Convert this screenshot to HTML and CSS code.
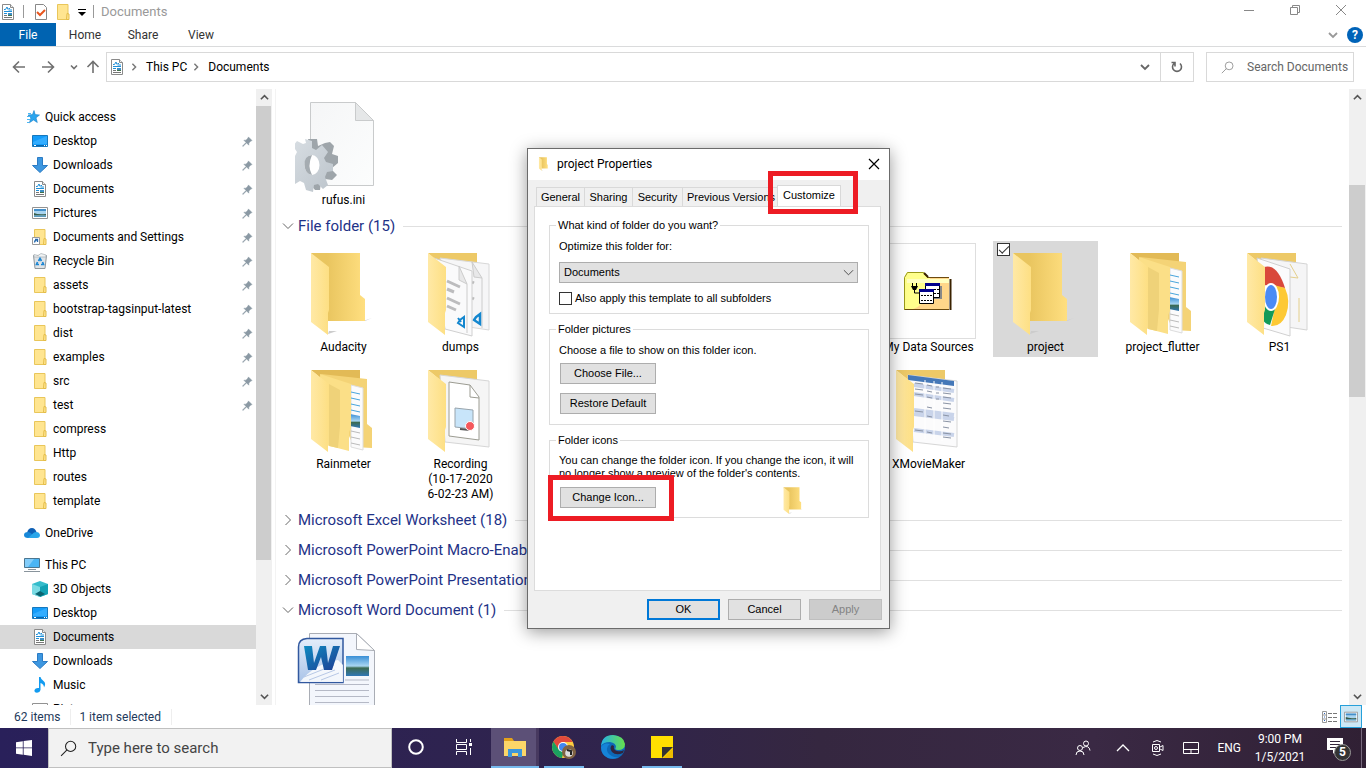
FILE: index.html
```html
<!DOCTYPE html>
<html lang="en">
<head>
<meta charset="utf-8">
<title>Documents</title>
<link rel="stylesheet" href="styles.css">
</head>
<body>
<svg class="defs" aria-hidden="true">
  <defs>
    <linearGradient id="gBack" x1="0" x2="1"><stop offset="0.300" stop-color="#e9c55f"/><stop offset="1" stop-color="#ffdf80"/></linearGradient>
    <linearGradient id="gFront" x1="0" x2="1"><stop offset="0" stop-color="#ffe9a6"/><stop offset="1" stop-color="#fddf83"/></linearGradient>
    <linearGradient id="gSky" x1="0" y1="0" x2="0" y2="1"><stop offset="0" stop-color="#3a8fd6"/><stop offset=".5" stop-color="#a9d6f2"/><stop offset=".6" stop-color="#3c6b52"/><stop offset="1" stop-color="#2f77b5"/></linearGradient>
    <linearGradient id="gPage" x1="0" y1="0" x2="1" y2="1"><stop offset="0" stop-color="#f5f6f7"/><stop offset="1" stop-color="#fcfdfd"/></linearGradient>
    <linearGradient id="gGear" x1="0" y1="0" x2="1" y2="1"><stop offset="0" stop-color="#d9dfe4"/><stop offset="1" stop-color="#bcc4cb"/></linearGradient>
    <linearGradient id="gWord" x1="0" y1="0" x2="0" y2="1"><stop offset="0" stop-color="#e4eefa"/><stop offset="1" stop-color="#a9c3e8"/></linearGradient>
    <linearGradient id="gW" x1="0" y1="0" x2="1" y2="1"><stop offset="0" stop-color="#0f8bc0"/><stop offset="1" stop-color="#1d3d94"/></linearGradient>
    <linearGradient id="gEdge" x1="0" y1="0" x2="1" y2="0"><stop offset="0" stop-color="#25b1e8"/><stop offset="1" stop-color="#67e04a"/></linearGradient>
  </defs>

  <symbol id="i-doc" viewBox="0 0 16 16">
    <path d="M2.500.500h8l3 3v12h-11z" fill="#fff" stroke="#8a8a8a"/><path d="M10.500.500v3h3" fill="#eee" stroke="#8a8a8a"/>
    <path d="M4 5.500h1.500L7 3l1 2.500M8.500 4.500h1.500M8.500 6h3.500M4 7.500h8M4 9.500h3" stroke="#1e8fd8" fill="none"/><path d="M4 11.500h3M4 13.500h8" stroke="#777"/><path d="M8 9h4v3H8z" fill="#3d8ec4"/><path d="M8 11h4v1H8z" fill="#40704a"/>
  </symbol>
  <symbol id="i-folder" viewBox="0 0 16 16">
    <path d="M2.500.500h10.500v15h-10.500z" fill="#ffe590" stroke="#e9c65a"/><path d="M12 9.500l2 .500v5.500h-2.500z" fill="#ffe590" stroke="#e4bd48"/>
  </symbol>
  <symbol id="i-link" viewBox="0 0 16 16">
    <use href="#i-folder"/><path d="M.500 8.500h7v7h-7z" fill="#fff" stroke="#999"/><path d="M2.500 13.500q0-2 2-2.500M3 10.500h2.500v2.500" fill="none" stroke="#2468ad" stroke-width="1.300"/>
  </symbol>
  <symbol id="i-star" viewBox="0 0 16 16">
    <path d="M10 1.500l1.200 4.100 4.300.400-3.500 2.800 1.300 4.700-3.800-2.500-4.100 2.800 1.500-4.900L4 6l4.500-.400z" fill="#2ba5ee" stroke="#1580ca" stroke-width=".6"/><path d="M4 4.500h3M3 7.500h3M3 10.500h3M3 13.500h2" stroke="#4ab6f2"/>
  </symbol>
  <symbol id="i-desktop" viewBox="0 0 16 16"><path d="M.500 2.500h15v11H.500z" fill="#149cf9" stroke="#1678bd"/><path d="M1 9L15 3v8H1z" fill="#33adff"/><path d="M1 12.500h14" stroke="#0a66ac"/><path d="M2 12.500h2M12 12.500h1M14 12.500h1" stroke="#fff"/></symbol>
  <symbol id="i-down" viewBox="0 0 16 16"><path d="M5.500.500h5v8h5L8 15.500.500 8.500h5z" fill="#3d97e0" stroke="#2b7bc4"/></symbol>
  <symbol id="i-pic" viewBox="0 0 16 16"><path d="M.500 2.500h15v11H.500z" fill="#fff" stroke="#929292"/><path d="M2 4h12v8H2z" fill="#a9d4ef"/><path d="M2 4h12v2H2z" fill="#438fca"/><path d="M2 8q4 2 12 1v1.500H2z" fill="#395d48"/><path d="M2 10.500h12V12H2z" fill="#5c9cbe"/></symbol>
  <symbol id="i-bin" viewBox="0 0 16 16"><path d="M1.500 2.500h13l-1.500 13H3z" fill="#dfe3e6" stroke="#8f979c"/><path d="M2 1.500l4 1 3-2 5 1.500v2H2z" fill="#f1f3f4" stroke="#a5adb1" stroke-width=".7"/><path d="M6.500 8L8 5.500l1.500 2.500M10.500 9l1 2.500H9M7 11.500H4.500l1-2.500" fill="none" stroke="#1b86d4" stroke-width="1.700"/></symbol>
  <symbol id="i-cloud" viewBox="0 0 16 16"><path d="M3 8Q4 3 8 3q3 0 4.500 4L9 12z" fill="#0f60b5"/><path d="M4 13Q0 13 0 10t4-3q2 0 5 3l3 3z" fill="#1888d8"/><path d="M4 13l6-5.500q5-1.500 6 2.500 0 3-3 3z" fill="#2aa6ea"/></symbol>
  <symbol id="i-pc" viewBox="0 0 16 16"><path d="M.500 1.500h15v9H.500z" fill="#4ab5f5" stroke="#4b7690"/><path d="M1 2h9L4 10H1z" fill="#83cdfa"/><path d="M4 12.500h8M0 14.500h16" stroke="#89949c"/></symbol>
  <symbol id="i-cube" viewBox="0 0 16 16"><path d="M0 3l8-3 8 3v10l-8 3-8-3z" fill="#35bccb"/><path d="M0 3l8 3v10l-8-3z" fill="#7adbe4"/><path d="M8 6l8-3v10l-8 3z" fill="#13a2b4"/><path d="M3 13l5-3 5 3-5 2.500z" fill="#0b6471"/></symbol>
  <symbol id="i-music" viewBox="0 0 16 16"><path d="M7 0h1.500q.500 2.500 3 4 3 2.500.500 6.500 0-3.500-3.500-4.500V13Q8 15.500 5 15.800 2 15.500 2.500 13q1-2.500 4.500-2z" fill="#129bf0"/></symbol>
  <symbol id="i-pin" viewBox="0 0 12 12"><path d="M7 1l4 4-1.300.500L7.500 7.700 7.400 10 5 7.600 1 11.500.500 11 4.400 7 2 4.600l2.300-.100L6.500 2.300z" fill="#8b99a4" stroke="#8b99a4" stroke-width=".5"/></symbol>
  <symbol id="i-search" viewBox="0 0 16 16"><circle cx="10" cy="6" r="4.800" fill="none" stroke="currentColor"/><path d="M6.600 9.400L1 15" stroke="currentColor"/></symbol>
  <symbol id="i-chev" viewBox="0 0 10 10"><path d="M1 3l4 4 4-4" fill="none" stroke="currentColor" stroke-width="1.800"/></symbol>
  <symbol id="i-thin" viewBox="0 0 12 12"><path d="M1 3.500l5 5 5-5" fill="none" stroke="currentColor"/></symbol>

  <symbol id="f-front" viewBox="0 0 96 96"><path d="M16 10l18 14v43l-1 3v22L16 79z" fill="url(#gFront)"/></symbol>
  <symbol id="f-plain" viewBox="0 0 96 96">
    <path d="M68 78l9-3-7 3zM33 91l9-3-8 0z" fill="#ccc"/>
    <path d="M16 10h49v42l5 4v22H33z" fill="url(#gBack)"/><use href="#f-front"/>
  </symbol>
  <symbol id="f-code" viewBox="0 0 96 96">
    <path d="M16 10h49v12H28z" fill="#edc967"/>
    <path d="M28 15l49 6v66l-20-3z" fill="#f6f6f7" stroke="#d8d8d8"/><path d="M60 19l10 16-8-1z" fill="#e8e8e9" stroke="#ccc"/><path d="M70 35v50" stroke="#ccc"/>
    <path d="M60 39l2 1M60 55l2 1" stroke="#bbb" stroke-width="3"/><path d="M68 71v10l-6-4 2-3z" fill="none" stroke="#1487cf" stroke-width="2.500"/>
    <path d="M22 15l38 13v65l-27-7z" fill="#fafafb" stroke="#d0d0d0"/><path d="M47 23l8 18-8-4z" fill="#e8e8e9" stroke="#ccc"/><path d="M55 41v49" stroke="#ccc"/>
    <path d="M35 38l13 6M35 46l7 3M35 55l13 6M35 63l9 4" stroke="#bcbcbe" stroke-width="3"/><path d="M52 74v10l-6-4 2-3zM46 75l3 4" fill="none" stroke="#1487cf" stroke-width="2"/>
    <use href="#f-front"/>
  </symbol>
  <symbol id="f-nested" viewBox="0 0 96 96">
    <path d="M16 10h49v10H28z" fill="#e2ba56"/><path d="M26 14l46 5v45l5 4v20l-18-1z" fill="#f4d376"/>
    <path d="M56 25l12 3v62l-12-3z" fill="#fbfbfc" stroke="#ddd"/><path d="M56 32l9 2M56 38l9 2M56 44l9 2M56 50l9 2" stroke="#48a5dc"/><path d="M55 54l10 2v12l-10-2z" fill="url(#gSky)"/><path d="M56 71l9 2M56 77l9 2M56 83l9 2" stroke="#bbb"/>
    <path d="M25 14l31 10v44l-2 4v19l-27-7z" fill="#fbdf87"/><path d="M34 24l11 6v36l-2 22-9-2z" fill="#efd279"/>
    <use href="#f-front"/>
  </symbol>
  <symbol id="f-rec" viewBox="0 0 96 96">
    <path d="M16 10h49v10H28z" fill="#edc967"/><path d="M28 15l49 6v66l-44-5z" fill="#f5f5f5" stroke="#d6d6d6"/>
    <path d="M37 22l21 3 9 12v43l-30-4z" fill="#fff" stroke="#9c9c92"/><path d="M58 25v12l9 1" fill="none" stroke="#9c9c92"/>
    <path d="M43 48l18 2v19l-18-2z" fill="#c8e5fa" stroke="#98a4ac"/><path d="M48 69l10 1" stroke="#555" stroke-width="2"/><circle cx="58" cy="66" r="4.500" fill="#f4585c" stroke="#fff"/>
    <use href="#f-front"/>
  </symbol>
  <symbol id="f-chrome" viewBox="0 0 96 96">
    <path d="M16 10h49v10H28z" fill="#edc967"/><path d="M30 15l46 6v66l-20-3z" fill="#f5f5f6" stroke="#d4d4d4"/><path d="M59 21l8 14-8-1M68 55v24" stroke="#e4cf8c" fill="none"/>
    <path d="M26 15l33 11v67l-27-8z" fill="#fbfbfc" stroke="#d0d0d0"/>
    <path d="M33 24Q46 20 54 45L33 42z" fill="#d9483b"/><path d="M43 42l11 3q6 13 1 27-5 12-15 11L44 64z" fill="#fdc935"/><path d="M33 62l11 4-5 16q-5-1-7-5z" fill="#129a58"/>
    <ellipse cx="40" cy="54" rx="8" ry="14" fill="#fff"/><ellipse cx="40" cy="54" rx="6" ry="12" fill="#4b8bf5"/>
    <use href="#f-front"/>
  </symbol>
  <symbol id="f-sheet" viewBox="0 0 96 96">
    <path d="M16 10h49v10H28z" fill="#edc967"/><path d="M28 15l49 6v66l-44-5z" fill="#fbfbfc" stroke="#d6d6d6"/>
    <path d="M28 15l46 6v5l-46-6z" fill="#4578b8"/>
    <path d="M34 25l40 6M34 34l40 6M34 50l40 5M34 54l40 5M34 70l40 5" stroke="#c9d4ea" stroke-width="4"/>
    <path d="M45 20v59M54 21v59M62 22v59" stroke="#fff"/><path d="M35 23l8 1M35 29l8 1M35 34l8 1M35 51l8 1M35 70l8 1M47 25l5 1M47 31l5 1M47 37l5 1M47 47l5 1M47 56l5 1M47 72l5 1M63 28l8 1M63 33l8 1M63 37l8 1M63 43l8 1M63 48l8 1M63 55l6 1M63 61l8 1M63 67l6 1M63 73l8 1M63 77l8 1M56 27l3 0M56 33l3 0M56 39l3 0" stroke="#8a93a4"/>
    <use href="#f-front"/>
  </symbol>
  <symbol id="f-data" viewBox="0 0 48 40">
    <path d="M0 7l3-6h17l4 5h21v33H0z" fill="#ffff8c"/><path d="M26 7h19v32H5q20-3 21-32z" fill="#ffd68a"/><path d="M3 8h42v4H3z" fill="#ffffc0"/>
    <path d="M.500 39V6.500l3-5h16l4 5" fill="none" stroke="#999919"/><path d="M23 6.500h22M1 38.500h44" stroke="#6b4a10"/><path d="M46.500 8v31M20 2l4 4" stroke="#3a2200" stroke-width="2"/>
    <path d="M8.500 15v-3M12.500 15v-3M10.500 19v3h5" stroke="#000" fill="none"/><path d="M7 15h7l-2 4H9z" fill="#000"/>
    <path d="M23 15h15v13H23z" fill="#888"/><path d="M21.500 13.500h14v13h-14z" fill="#fff" stroke="#000"/><path d="M21 12h15v3H21z" fill="#00008b"/>
    <path d="M15.500 19.500h14v13h-14z" fill="#fff" stroke="#000"/><path d="M15 18h15v3H15z" fill="#00008b"/><path d="M17 24.500h11M17 29.500h11M30 18.500h5M30 22.500h5" stroke="#000" stroke-dasharray="2 1"/>
  </symbol>
  <symbol id="f-ini" viewBox="0 0 96 96">
    <g transform="translate(-1 -2)">
    <path d="M16.500 8.500h45l18 18v65h-63z" fill="url(#gPage)" stroke="#c9cbcc"/><path d="M61.500 8.500v18h18z" fill="#e5e7e8" stroke="#c9cbcc"/>
    <path d="M14 45l9 0 1 7 7-3 5-1 4 4-2 8 6 2v7l-6 5 1 3 4 4-5 5-7-1-4 3-1 8h-5l-5-6 2-30z" fill="#9ea5aa"/>
    <path d="M11 45l7 2v7l4 2 6-5 6 7-4 6 2 4 7 2v7l-6 1-2 5 3 8-5 4-5-5-4 1-1 7-7-2-2-7-4-2-5 3-4-6 4-6-1-4-6-4 1-8 6 0 2-4-4-6 4-5 6 3 3-1z" fill="url(#gGear)"/>
    <ellipse cx="18" cy="71" rx="7.500" ry="10" fill="#fff"/><path d="M18 61q-8 1-7.500 10 .500 9 7.500 10-5-9 0-20z" fill="#a5acb1"/>
    </g>
  </symbol>
  <symbol id="f-word" viewBox="0 0 96 96">
    <path d="M14.500 6.500h47l18 17v80h-65z" fill="#f3f6fc" stroke="#a9adb5"/><path d="M61.500 6.500v16l18 1z" fill="#fff" stroke="#a9adb5"/><path d="M51 29h23v20H51z" fill="url(#gSky)"/><path d="M50 53h24M20 57.500h54M20 63.500h54M20 69.500h54M20 75.500h54M20 81.500h54" stroke="#b5b9c6"/>
    <path d="M12 11.500h36v44H3.500V20q0-8 8.500-8.500z" fill="url(#gWord)" stroke="#31589f" stroke-width="1.500"/><path d="M5 55q14-18 38-22l5 5v17z" fill="#fff" opacity=".85"/><path d="M9 50l30-12M14 53l26-10M26 53l18-7" stroke="#b7c8e6"/>
    <path d="M9 19h8l2 17 6-17h6l2 17 5-17h7L37 43h-8l-3-13-5 13h-8z" fill="url(#gW)"/>
  </symbol>
</svg>

<div class="desktop">
  <header class="titlebar">
    <svg class="ic"><use href="#i-doc"/></svg><i class="bar"></i>
    <svg class="ic check" viewBox="0 0 16 16"><path d="M2.500.500h8l3 3v12h-11z" fill="#fff" stroke="#888"/><path d="M4 8l3 3 5-5" fill="none" stroke="#e8551e" stroke-width="2"/></svg>
    <svg class="ic"><use href="#i-folder"/></svg>
    <svg class="more" viewBox="0 0 8 8"><path d="M0 1.500h8" stroke="#000"/><path d="M0 4h8L4 8z"/></svg><i class="bar"></i>
    <span class="window-name">Documents</span>
    <div class="window-buttons">
      <button aria-label="Minimize"><svg viewBox="0 0 12 12"><path d="M1 6.500h10" stroke="#888"/></svg></button>
      <button aria-label="Restore"><svg viewBox="0 0 12 12"><path d="M1.500 3.500h7v7h-7zM3.500 3V1.500h7v7H9" fill="none" stroke="#888"/></svg></button>
      <button aria-label="Close"><svg viewBox="0 0 12 12"><path d="M1 1l10 10M11 1L1 11" stroke="#888"/></svg></button>
    </div>
  </header>
  <nav class="ribbon">
    <button class="file">File</button><button>Home</button><button>Share</button><button>View</button>
    <span class="ribbon-end"><svg class="tiny"><use href="#i-chev"/></svg><b class="help">?</b></span>
  </nav>
  <div class="navbar">
    <div class="arrows">
      <button aria-label="Back"><svg viewBox="0 0 14 14"><path d="M13 7H1.500M7 1.500L1.500 7 7 12.500" /></svg></button>
      <button aria-label="Forward"><svg viewBox="0 0 14 14"><path d="M1 7h11.500M7 1.500L12.500 7 7 12.500"/></svg></button>
      <button aria-label="Recent" class="recent"><svg viewBox="0 0 10 10"><path d="M2 3.500l3 3 3-3"/></svg></button>
      <button aria-label="Up"><svg viewBox="0 0 14 14"><path d="M7 13V1.500M1.500 7L7 1.500 12.500 7"/></svg></button>
    </div>
    <div class="address">
      <svg class="ic"><use href="#i-doc"/></svg>
      <svg class="crumb"><use href="#i-chev"/></svg><span>This PC</span><svg class="crumb"><use href="#i-chev"/></svg><span>Documents</span>
      <svg class="drop"><use href="#i-chev"/></svg>
      <button class="refresh" aria-label="Refresh"><svg viewBox="0 0 14 14"><path d="M10 3.500a4.500 4.500 0 1 1-6 0M1.500 2.500H5V6.500" fill="none" stroke="#666" stroke-width="1.600"/></svg></button>
    </div>
    <label class="search"><svg class="glass"><use href="#i-search"/></svg><input aria-label="Search Documents" placeholder="Search Documents"></label>
  </div>

  <main class="main">
    <aside class="side">
      <ul class="tree">
        <li class="root"><svg class="ic"><use href="#i-star"/></svg>Quick access</li>
        <li><svg class="ic"><use href="#i-desktop"/></svg>Desktop<svg class="pin"><use href="#i-pin"/></svg></li>
        <li><svg class="ic"><use href="#i-down"/></svg>Downloads<svg class="pin"><use href="#i-pin"/></svg></li>
        <li><svg class="ic"><use href="#i-doc"/></svg>Documents<svg class="pin"><use href="#i-pin"/></svg></li>
        <li><svg class="ic"><use href="#i-pic"/></svg>Pictures<svg class="pin"><use href="#i-pin"/></svg></li>
        <li><svg class="ic"><use href="#i-link"/></svg>Documents and Settings<svg class="pin"><use href="#i-pin"/></svg></li>
        <li><svg class="ic"><use href="#i-bin"/></svg>Recycle Bin<svg class="pin"><use href="#i-pin"/></svg></li>
        <li><svg class="ic"><use href="#i-folder"/></svg>assets<svg class="pin"><use href="#i-pin"/></svg></li>
        <li><svg class="ic"><use href="#i-folder"/></svg>bootstrap-tagsinput-latest<svg class="pin"><use href="#i-pin"/></svg></li>
        <li><svg class="ic"><use href="#i-folder"/></svg>dist<svg class="pin"><use href="#i-pin"/></svg></li>
        <li><svg class="ic"><use href="#i-folder"/></svg>examples<svg class="pin"><use href="#i-pin"/></svg></li>
        <li><svg class="ic"><use href="#i-folder"/></svg>src<svg class="pin"><use href="#i-pin"/></svg></li>
        <li><svg class="ic"><use href="#i-folder"/></svg>test<svg class="pin"><use href="#i-pin"/></svg></li>
        <li><svg class="ic"><use href="#i-folder"/></svg>compress</li>
        <li><svg class="ic"><use href="#i-folder"/></svg>Http</li>
        <li><svg class="ic"><use href="#i-folder"/></svg>routes</li>
        <li><svg class="ic"><use href="#i-folder"/></svg>template</li>
        <li class="root gap"><svg class="ic"><use href="#i-cloud"/></svg>OneDrive</li>
        <li class="root gap"><svg class="ic"><use href="#i-pc"/></svg>This PC</li>
        <li><svg class="ic"><use href="#i-cube"/></svg>3D Objects</li>
        <li><svg class="ic"><use href="#i-desktop"/></svg>Desktop</li>
        <li class="current"><svg class="ic"><use href="#i-doc"/></svg>Documents</li>
        <li><svg class="ic"><use href="#i-down"/></svg>Downloads</li>
        <li><svg class="ic"><use href="#i-music"/></svg>Music</li>
        <li><svg class="ic"><use href="#i-pic"/></svg>Pictures</li>
      </ul>
      <div class="scroll"><svg class="up"><use href="#i-chev"/></svg><div class="track"><div class="thumb side-thumb"></div></div><svg><use href="#i-chev"/></svg></div>
    </aside>

    <section class="files">
      <div class="grid">
        <figure><svg><use href="#f-ini"/></svg><figcaption>rufus.ini</figcaption></figure>
      </div>
      <h2><svg><use href="#i-thin"/></svg>File folder (15)</h2>
      <div class="grid">
        <figure><svg><use href="#f-plain"/></svg><figcaption>Audacity</figcaption></figure>
        <figure><svg><use href="#f-code"/></svg><figcaption>dumps</figcaption></figure>
        <figure class="c6"><div class="thumbnail"><svg><use href="#f-data"/></svg></div><figcaption>My Data Sources</figcaption></figure>
        <figure class="selected"><input type="checkbox" class="tick" aria-label="Select project" checked><svg><use href="#f-plain"/></svg><figcaption>project</figcaption></figure>
        <figure><svg><use href="#f-nested"/></svg><figcaption>project_flutter</figcaption></figure>
        <figure><svg><use href="#f-chrome"/></svg><figcaption>PS1</figcaption></figure>
        <figure><svg><use href="#f-nested"/></svg><figcaption>Rainmeter</figcaption></figure>
        <figure><svg><use href="#f-rec"/></svg><figcaption>Recording<br>(10-17-2020<br>6-02-23 AM)</figcaption></figure>
        <figure class="c6"><svg><use href="#f-sheet"/></svg><figcaption>XMovieMaker</figcaption></figure>
      </div>
      <h2 class="closed"><svg><use href="#i-thin"/></svg>Microsoft Excel Worksheet (18)</h2>
      <h2 class="closed"><svg><use href="#i-thin"/></svg>Microsoft PowerPoint Macro-Enabled</h2>
      <h2 class="closed"><svg><use href="#i-thin"/></svg>Microsoft PowerPoint Presentation</h2>
      <h2><svg><use href="#i-thin"/></svg>Microsoft Word Document (1)</h2>
      <div class="grid"><figure><svg><use href="#f-word"/></svg></figure></div>
    </section>
    <div class="scroll main-scroll"><svg class="up"><use href="#i-chev"/></svg><div class="track"><div class="thumb main-thumb"></div></div><svg><use href="#i-chev"/></svg></div>
  </main>

  <footer class="status">
    <span>62 items</span><span>1 item selected</span>
    <button class="view" aria-label="Details"><svg viewBox="0 0 16 12"><path d="M.500.500h4v11h-4zM.500 4h4M.500 8h4" fill="none" stroke="#999"/><path d="M2 2.500h1M2 6h1M2 9.500h1" stroke="#36b"/><path d="M6 2.500h4M11 2.500h4M6 6.500h4M11 6.500h4M6 10.500h4M11 10.500h4" stroke="#777"/></svg></button>
    <button class="view on" aria-label="Large icons"><svg viewBox="0 0 16 16"><use href="#i-pic"/></svg></button>
  </footer>

  <div class="taskbar">
    <button class="start" aria-label="Start"><svg viewBox="0 0 16 16"><path d="M0 2.200l6.800-1v6.300H0zM7.600 1.100L16 0v7.500H7.600zM0 8.300h6.800v6.400l-6.800-1zM7.600 8.300H16V16l-8.400-1.200z" fill="#fff"/></svg></button>
    <label class="task-search"><svg><use href="#i-search"/></svg><input aria-label="Type here to search" placeholder="Type here to search"></label>
    <button class="task" aria-label="Cortana"><svg viewBox="0 0 24 24"><circle cx="12" cy="12" r="6.800" fill="none" stroke="#fff" stroke-width="2"/></svg></button>
    <button class="task" aria-label="Task view"><svg viewBox="0 0 24 24"><path d="M4.500 4v3.500h10V4M4.500 20v-3.500h10V20M4.500 9.500h10v5h-10zM18.500 4v3M18.500 13v7" fill="none" stroke="#fff"/><path d="M17 8h3v3h-3z" fill="#fff"/></svg></button>
    <button class="task active open" aria-label="File Explorer"><svg viewBox="0 0 24 24"><path d="M1 3h8l2 3h11v14H1z" fill="#e3a21a"/><path d="M1 6h22v15H1z" fill="#fcd668"/><path d="M5 14h14v8h-4v-4H9v4H5z" fill="#3c97dc"/></svg></button>
    <button class="task open narrow" aria-label="Chrome"><svg viewBox="0 0 24 24"><circle cx="11" cy="12" r="11" fill="#ffcd40"/><path d="M11 1a11 11 0 0 1 9.600 6H11L6 14 1.500 6.500A11 11 0 0 1 11 1z" fill="#e24a3c"/><path d="M1.500 6.500L7 15h5l-2 8A11 11 0 0 1 1.500 6.500z" fill="#1ba160"/><circle cx="11" cy="12" r="5" fill="#fff"/><circle cx="11" cy="12" r="4" fill="#4287f0"/><circle cx="17" cy="17" r="7" fill="#806343"/><circle cx="17" cy="18" r="3.800" fill="#ddd"/><path d="M15 15l4 1v4" fill="none" stroke="#222" stroke-width="2"/></svg></button>
    <button class="task" aria-label="Edge"><svg viewBox="0 0 24 24"><circle cx="12" cy="12" r="12" fill="#0d69b8"/><path d="M0 11Q1 0 12 0q11 1 12 9 0 6-7 6-4 0-2-3 0-4-6-5-7 0-9 4z" fill="url(#gEdge)"/><path d="M9 9q-5 3-2 9 4 5 11 4-5 3-11 1Q0 20 0 12q3-5 9-3z" fill="#1684d8"/><path d="M11 10q-3 3 0 7 4 4 11 1l1-3q-3 2-7 1-4-1-3-5z" fill="#30253f"/></svg></button>
    <button class="task open narrow" aria-label="Sticky Notes"><svg viewBox="0 0 24 24"><path d="M1 1h22v22H1z" fill="#ffdf00"/><path d="M12 23V12h11z" fill="#333"/><path d="M13 23l10-10v10z" fill="#eebd00"/></svg></button>
    <div class="tray">
      <svg viewBox="0 0 16 16"><g fill="none" stroke="#fff"><circle cx="11" cy="3.500" r="2.500"/><circle cx="5" cy="8" r="2.500"/><path d="M1 15q0-4 4-4t4 4M8 7.500q6-3 7 3"/></g></svg>
      <svg viewBox="0 0 16 16"><path d="M2 11l6-6 6 6" fill="none" stroke="#fff" stroke-width="1.300"/></svg>
      <svg viewBox="0 0 16 16"><path d="M3.500 4.500h7v7h-7zM11 7l3-1.500v5L11 9M4 2q4-3 8 0M4 14q4 3 8 0" fill="none" stroke="#fff"/><circle cx="7" cy="8" r="1.500" fill="none" stroke="#fff"/></svg>
      <svg viewBox="0 0 16 16"><path d="M.500 2.500h15v11H.500zM.500 9.500h15M8 9.500v4" fill="none" stroke="#fff"/></svg>
      <span class="lang">ENG</span>
      <span class="clock">9:00 PM<br>1/5/2021</span>
      <span class="note"><svg viewBox="0 0 16 16"><path d="M0 0h16v12H9l-3 4v-4H0z" fill="#fff"/><path d="M3 3.500h10M3 6.500h10M3 9.500h7" stroke="#33263c"/></svg><b>5</b></span>
      <button class="peek" aria-label="Show desktop"></button>
    </div>
  </div>

  <div class="dialog" role="dialog" aria-label="project Properties">
    <div class="dialog-title"><svg viewBox="14 8 60 86"><use href="#f-plain" width="96" height="96"/></svg><span>project Properties</span><button aria-label="Close"><svg viewBox="0 0 12 12"><path d="M1 1l10 10M11 1L1 11" stroke="#000" stroke-width="1.200"/></svg></button></div>
    <div class="tabs"><button>General</button><button>Sharing</button><button class="third">Security</button><button class="last">Previous Versions</button><button class="front">Customize<span class="mark mark-tab"></span></button></div>
    <div class="panel">
      <fieldset><legend>What kind of folder do you want?</legend>
        <label for="kind">Optimize this folder for:</label>
        <div class="pick"><select id="kind"><option>Documents</option></select><svg><use href="#i-thin"/></svg></div>
        <label class="also"><input type="checkbox">Also apply this template to all subfolders</label>
      </fieldset>
      <fieldset class="pictures"><legend>Folder pictures</legend>
        <p>Choose a file to show on this folder icon.</p>
        <button class="btn first">Choose File...</button>
        <button class="btn">Restore Default</button>
      </fieldset>
      <fieldset><legend>Folder icons</legend>
        <p class="two">You can change the folder icon. If you change the icon, it will<br>no longer show a preview of the folder's contents.</p>
        <div class="change"><div class="btn-wrap"><button class="btn">Change Icon...</button><span class="mark mark-icon"></span></div><svg viewBox="15 9 60 86"><use href="#f-plain" width="96" height="96"/></svg></div>
      </fieldset>
    </div>
    <div class="actions"><button class="ok">OK</button><button>Cancel</button><button disabled>Apply</button></div>
  </div>
</div>
</body>
</html>
```

FILE: styles.css
```css
* { box-sizing: border-box; }
body { margin: 0; font: 12px/15px Roboto, "Open Sans", sans-serif; color: #000; background: #fff; }
button, input, select { font: inherit; color: inherit; margin: 0; }
button { border: 0; padding: 0; background: none; }
svg { display: block; flex: none; }
.defs { position: absolute; width: 0; height: 0; }
.desktop { position: relative; height: 100vh; display: flex; flex-direction: column; overflow: hidden; }
.ic { width: 16px; height: 16px; }

.titlebar { height: 23px; display: flex; align-items: center; }
.titlebar .bar { width: 1px; height: 13px; background: #999; margin: 0 7px; }
.titlebar .check { margin: 0 6px 0 2px; }
.more { width: 8px; height: 8px; margin-left: 7px; }
.window-name { color: #999; font-size: 13px; }
.window-buttons { margin-left: auto; display: flex; padding-right: 2px; }
.window-buttons button { width: 46px; height: 23px; display: grid; place-items: center; padding-bottom: 3px; }
.window-buttons svg { width: 12px; height: 12px; }

.ribbon { height: 24px; display: flex; border-bottom: 1px solid #dadbdc; color: #333; }
.ribbon button { width: 58px; padding-top: 1px; }
.ribbon .file { width: 56px; background: #0063b1; color: #fff; }
.ribbon-end { margin-left: auto; display: flex; align-items: center; gap: 9px; padding-right: 3px; color: #999; }
.tiny { width: 10px; height: 10px; }
.help { width: 16px; height: 16px; border-radius: 50%; background: #0063b8; color: #fff; text-align: center; line-height: 16px; }

.navbar { height: 42px; padding: 5px 12px 7px; display: flex; }
.arrows { width: 94px; display: flex; align-items: center; justify-content: space-between; padding-right: 6px; }
.arrows svg { width: 14px; height: 14px; fill: none; stroke: #707070; stroke-width: 1.6; }
.arrows button { margin-right: 8px; }
.arrows button:last-child { margin-right: 0; }
.arrows .recent { margin-right: 0; }
.arrows .recent svg { width: 10px; height: 10px; }
.address { flex: 1; border: 1px solid #d9d9d9; display: flex; align-items: center; padding-left: 2px; }
.crumb { width: 8px; height: 8px; transform: rotate(-90deg); margin: 0 8px 0 5px; color: #777; }
.drop { width: 10px; height: 10px; color: #666; margin-left: auto; margin-right: 10px; }
.refresh { width: 33px; align-self: stretch; border-left: 1px solid #d9d9d9; display: grid; place-items: center; }
.refresh svg { width: 14px; height: 14px; }
.search { width: 148px; margin-left: 12px; border: 1px solid #d9d9d9; display: flex; align-items: center; padding-left: 14px; gap: 13px; }
.glass { width: 13px; height: 13px; color: #888; }
.search input, .task-search input { border: 0; background: none; outline: 0; padding: 0; min-width: 0; flex: 1; }
.search input::placeholder { color: #666; opacity: 1; }

.main { flex: 1; min-height: 0; display: flex; }
.side { width: 276px; display: flex; border-right: 1px solid #f3f3f3; overflow: hidden; padding-right: 3px; }
.tree { list-style: none; margin: 0; padding: 16px 0 0; flex: 1; overflow: hidden; }
.tree li { height: 24px; display: flex; align-items: center; gap: 5px; padding: 0 3px 0 32px; }
.tree .root { padding-left: 24px; }
.tree .gap { margin-top: 8px; }
.tree .current { background: #d9d9d9; }
.pin { width: 11px; height: 11px; margin-left: auto; }
.scroll { width: 16px; background: #f0f0f0; display: flex; flex-direction: column; align-items: center; color: #555; }
.scroll > svg { width: 9px; height: 17px; }
.scroll .up { transform: rotate(180deg); }
.track { flex: 1; align-self: stretch; }
.thumb { background: #cdcdcd; margin-right: 1px; }
.side-thumb { height: 78%; }
.main-scroll { width: 17px; }
.main-thumb { height: 36.5%; margin-top: 79px; }

.files { flex: 1; min-width: 0; overflow: hidden; padding: 5px 7px 0 8px; }
.grid { display: grid; grid-template-columns: repeat(9, 117px); }
figure { margin: 0 5px 1px 7px; min-height: 116px; padding: 2px 0; display: flex; flex-direction: column; align-items: center; position: relative; }
figure > svg { width: 96px; height: 96px; margin-right: 1px; }
figcaption { margin-top: 1px; text-align: center; white-space: nowrap; }
.c6 { grid-column: 6; }
.selected { background: #d9d9d9; }
.thumbnail { width: 96px; height: 96px; margin-right: 1px; border: 1px solid #dedede; display: grid; place-items: center; }
.thumbnail svg { width: 48px; height: 40px; }
.tick { position: absolute; left: 4px; top: 2px; width: 13px; height: 13px; appearance: none; border: 1px solid #333; background: #fff; }
.tick::after { content: ""; display: block; width: 9px; height: 4px; margin: 2px 1px; border: solid #333; border-width: 0 0 1px 1px; transform: rotate(-45deg); }
h2 { margin: 0; height: 30px; display: flex; align-items: center; font-size: 15px; line-height: 20px; font-weight: 400; color: #1e3287; white-space: nowrap; padding-left: 14px; position: relative; }
h2 > svg { position: absolute; left: -2px; width: 12px; height: 12px; color: #666; }
h2.closed > svg { transform: rotate(-90deg); }
h2::after { content: ""; flex: 1; height: 1px; background: #e0e0e0; margin-left: 8px; }

.status { height: 23px; display: flex; align-items: center; padding-left: 14px; color: #1e395b; }
.status span { padding: 1px 10px 0 0; margin-right: 8px; border-right: 1px solid #eee; }
.status .view { width: 21px; height: 23px; display: grid; place-items: center; }
.status .view:first-of-type { margin-left: auto; }
.view svg { width: 16px; height: 14px; }
.status .on { width: 22px; border: 1px solid #26a0da; background: #cce8f6; margin-right: 4px; }

.taskbar { height: 40px; display: flex; background: linear-gradient(90deg, #29205a, #30244c 45%, #352740 60%, #3a2944 80%, #302034); color: #fff; }
.start { width: 48px; display: grid; place-items: center; }
.start svg { width: 16px; height: 16px; }
.task-search { width: 344px; background: #f2f2f2; border: 1px solid #c0c0c0; display: flex; align-items: center; padding-left: 11px; gap: 11px; color: #222; font-size: 15px; }
.task-search svg { width: 17px; height: 17px; }
.task-search input::placeholder { color: #444; opacity: 1; }
.task { width: 48px; display: grid; place-items: center; border-bottom: 2px solid transparent; }
.task svg { width: 24px; height: 24px; }
.task.active { margin-left: 3px; background: linear-gradient(90deg, #5c5077 45px, #47395f 45px); }
.task.open { border-bottom-color: #76b9ed; }
.task.narrow { width: 40px; margin: 0 5px; }
.tray { margin-left: auto; display: flex; align-items: center; }
.tray > svg { width: 16px; height: 16px; margin-right: 18px; }
.tray > svg:first-child { margin-right: 24px; }
.clock { width: 62px; text-align: center; line-height: 18px; margin: 0 16px 0 8px; }
.note { position: relative; width: 20px; height: 20px; margin-right: 14px; }
.note svg { width: 16px; height: 16px; }
.note b { position: absolute; left: 7px; top: 6px; width: 17px; height: 17px; border-radius: 50%; border: 1px solid #999; background: #333; text-align: center; line-height: 15px; }
.peek { width: 5px; align-self: stretch; border-left: 1px solid #77697d; }

.dialog { position: absolute; left: 527px; top: 148px; width: 363px; background: #f0f0f0; border: 1px solid #6b6b6b; box-shadow: 0 3px 16px rgba(0,0,0,.4); font: 11px/13px "Liberation Sans", Arial, sans-serif; }
.dialog-title { height: 31px; background: #fff; display: flex; align-items: center; padding: 0 9px 1px 10px; font: 12px/15px Roboto, sans-serif; gap: 8px; }
.dialog-title > svg { width: 11px; height: 14px; }
.dialog-title button { margin-left: auto; }
.dialog-title button svg { width: 12px; height: 12px; }
.tabs { display: flex; align-items: flex-end; padding: 5px 6px 0 8px; height: 26px; }
.tabs button { width: 48px; height: 19px; padding: 0; border: 1px solid #d9d9d9; border-width: 1px 0 0 1px; background: #f0f0f0; white-space: nowrap; }
.tabs .third { width: 50px; }
.tabs .last { width: 95px; padding-left: 4px; overflow: hidden; text-align: left; }
.tabs .front { position: relative; width: 64px; height: 21px; padding-bottom: 2px; background: #fff; border-right-width: 1px; }
.mark { position: absolute; border: 5px solid #ed1c24; pointer-events: none; }
.mark-tab { left: -10px; top: -15px; width: 90px; height: 43px; }
.panel { margin: 0 8px 8px 6px; padding: 12px 11px 72px 14px; background: #fff; border: 1px solid #dcdcdc; display: flex; flex-direction: column; gap: 9px; }
fieldset { margin: 0; padding: 7px 10px 9px 9px; border: 1px solid #dcdcdc; min-width: 0; }
fieldset:first-child { padding-bottom: 8px; }
.pictures { padding-bottom: 10px; }
legend { padding: 0 2px; margin-left: -3px; }
fieldset label, fieldset p { display: block; margin: 0; line-height: 14px; }
.pick { display: grid; margin: 9px 0 8px; }
.pick > * { grid-area: 1 / 1; }
.pick svg { width: 11px; height: 11px; place-self: center end; margin-right: 4px; color: #444; pointer-events: none; }
select { appearance: none; width: 100%; height: 21px; padding: 0 4px; border: 1px solid #adadad; border-radius: 0; background: #e1e1e1; }
fieldset .also { display: flex; align-items: center; gap: 3px; }
.also input { appearance: none; width: 13px; height: 13px; border: 1px solid #333; background: #fff; }
.btn { display: block; width: 96px; height: 21px; margin: 0 1px; border: 1px solid #adadad; background: #e1e1e1; }
.btn.first { margin: 6px 1px 9px; }
fieldset .two { line-height: 13px; white-space: nowrap; }
.change { display: flex; align-items: flex-start; justify-content: space-between; height: 21px; margin: 7px 55px 0 0; }
.change > svg { width: 20px; height: 28px; }
.btn-wrap { position: relative; }
.mark-icon { left: -11px; top: -12px; width: 126px; height: 46px; }
.actions { display: flex; justify-content: flex-end; gap: 8px; padding: 0 7px 8px 0; }
.actions button { width: 73px; height: 21px; border: 1px solid #adadad; background: #e1e1e1; }
.actions .ok { border: 2px solid #0078d7; }
.actions button:disabled { background: #ccc; border-color: #bfbfbf; color: #838383; }
```
